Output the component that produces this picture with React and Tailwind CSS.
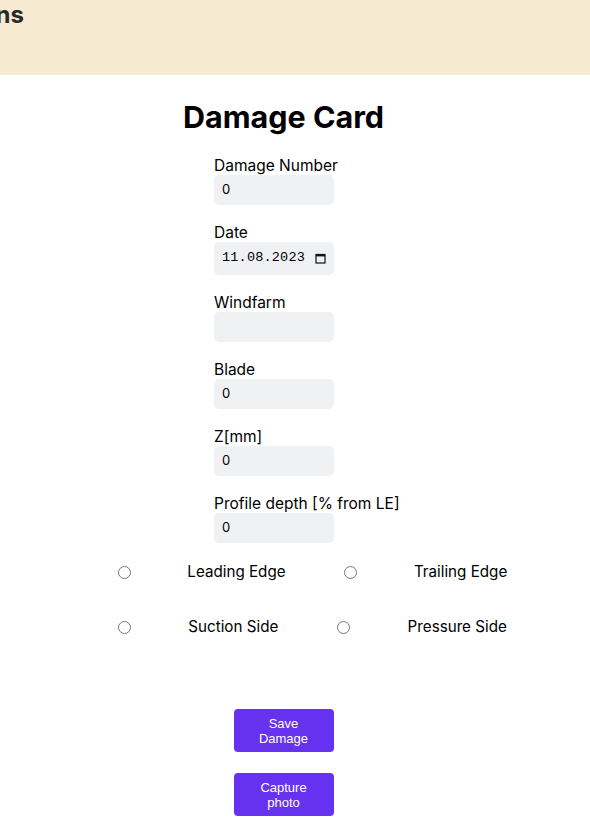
import React from "react";

const Field = ({ label, children }) => (
  <div className="flex flex-col">
    <label className="h-5 leading-[22px] text-[15.5px] text-black whitespace-nowrap">{label}</label>
    {children}
  </div>
);

const Box = ({ value, h = "h-[30px]" }) => (
  <div className={`${h} w-[120px] rounded-[5px] bg-[#f0f1f3] pl-[8px] flex items-center text-[13px] text-black`}>
    {value}
  </div>
);

const Radio = () => (
  <input type="radio" name="r" className="w-[13px] h-[13px] mt-0 mr-[3px] ml-[5px] mb-0" readOnly />
);

export default function App() {
  return (
    <div className="min-h-[823px] bg-white font-['Inter','Liberation_Sans',sans-serif] text-black">
      <div className="h-[75px] bg-[#f6ebd1]">
        <div className="w-[24px] overflow-hidden flex justify-end pt-[1px]">
          <span className="whitespace-nowrap text-[24px] font-bold leading-[28px] text-[#2a2a2a]">Inspections</span>
        </div>
      </div>
      <div className="w-[567px] flex flex-col items-center">
        <h1 className="mt-[24px] text-[30.5px] leading-[36px] font-bold">Damage Card</h1>
        <div className="w-[139px] mt-[20px] flex flex-col gap-[17px]">
          <Field label="Damage Number"><Box value="0" /></Field>
          <Field label="Date">
            <div className="h-[33px] w-[120px] rounded-[5px] bg-[#f0f1f3] pl-[8px] pr-[8px] flex items-center justify-between text-[13.5px] text-black font-['Liberation_Mono',monospace] tracking-[0.2px]">
              <span>11.08.2023</span>
              <svg width="11" height="11" viewBox="0 0 11 11">
                <rect x="1" y="1.5" width="9" height="8.5" fill="none" stroke="#111" strokeWidth="1.2" />
                <rect x="1" y="1" width="9" height="2.4" fill="#111" />
              </svg>
            </div>
          </Field>
          <Field label="Windfarm"><Box value="" /></Field>
          <Field label="Blade"><Box value="0" /></Field>
          <Field label="Z[mm]"><Box value="0" /></Field>
          <Field label="Profile depth [% from LE]"><Box value="0" /></Field>
        </div>
      </div>
      <div className="ml-[59px] w-[502px] mt-[19px] flex flex-col">
        <div className="h-[20px] flex items-center justify-evenly text-[15.2px]">
          <Radio />
          <span>Leading Edge</span>
          <Radio />
          <span>Trailing Edge</span>
        </div>
        <div className="h-[20px] mt-[35px] flex items-center justify-evenly text-[15.2px]">
          <Radio />
          <span>Suction Side</span>
          <Radio />
          <span>Pressure Side</span>
        </div>
      </div>
      <div className="w-[567px] flex flex-col items-center mt-[72px] gap-[21px]">
        <button className="w-[100px] h-[43px] rounded-[4px] bg-[#6632ef] text-white text-[13px] leading-[15px] px-4 font-['Liberation_Sans',Arial,sans-serif]">
          Save Damage
        </button>
        <button className="w-[100px] h-[43px] rounded-[4px] bg-[#6632ef] text-white text-[13px] leading-[15px] px-4 font-['Liberation_Sans',Arial,sans-serif]">
          Capture photo
        </button>
      </div>
    </div>
  );
}
